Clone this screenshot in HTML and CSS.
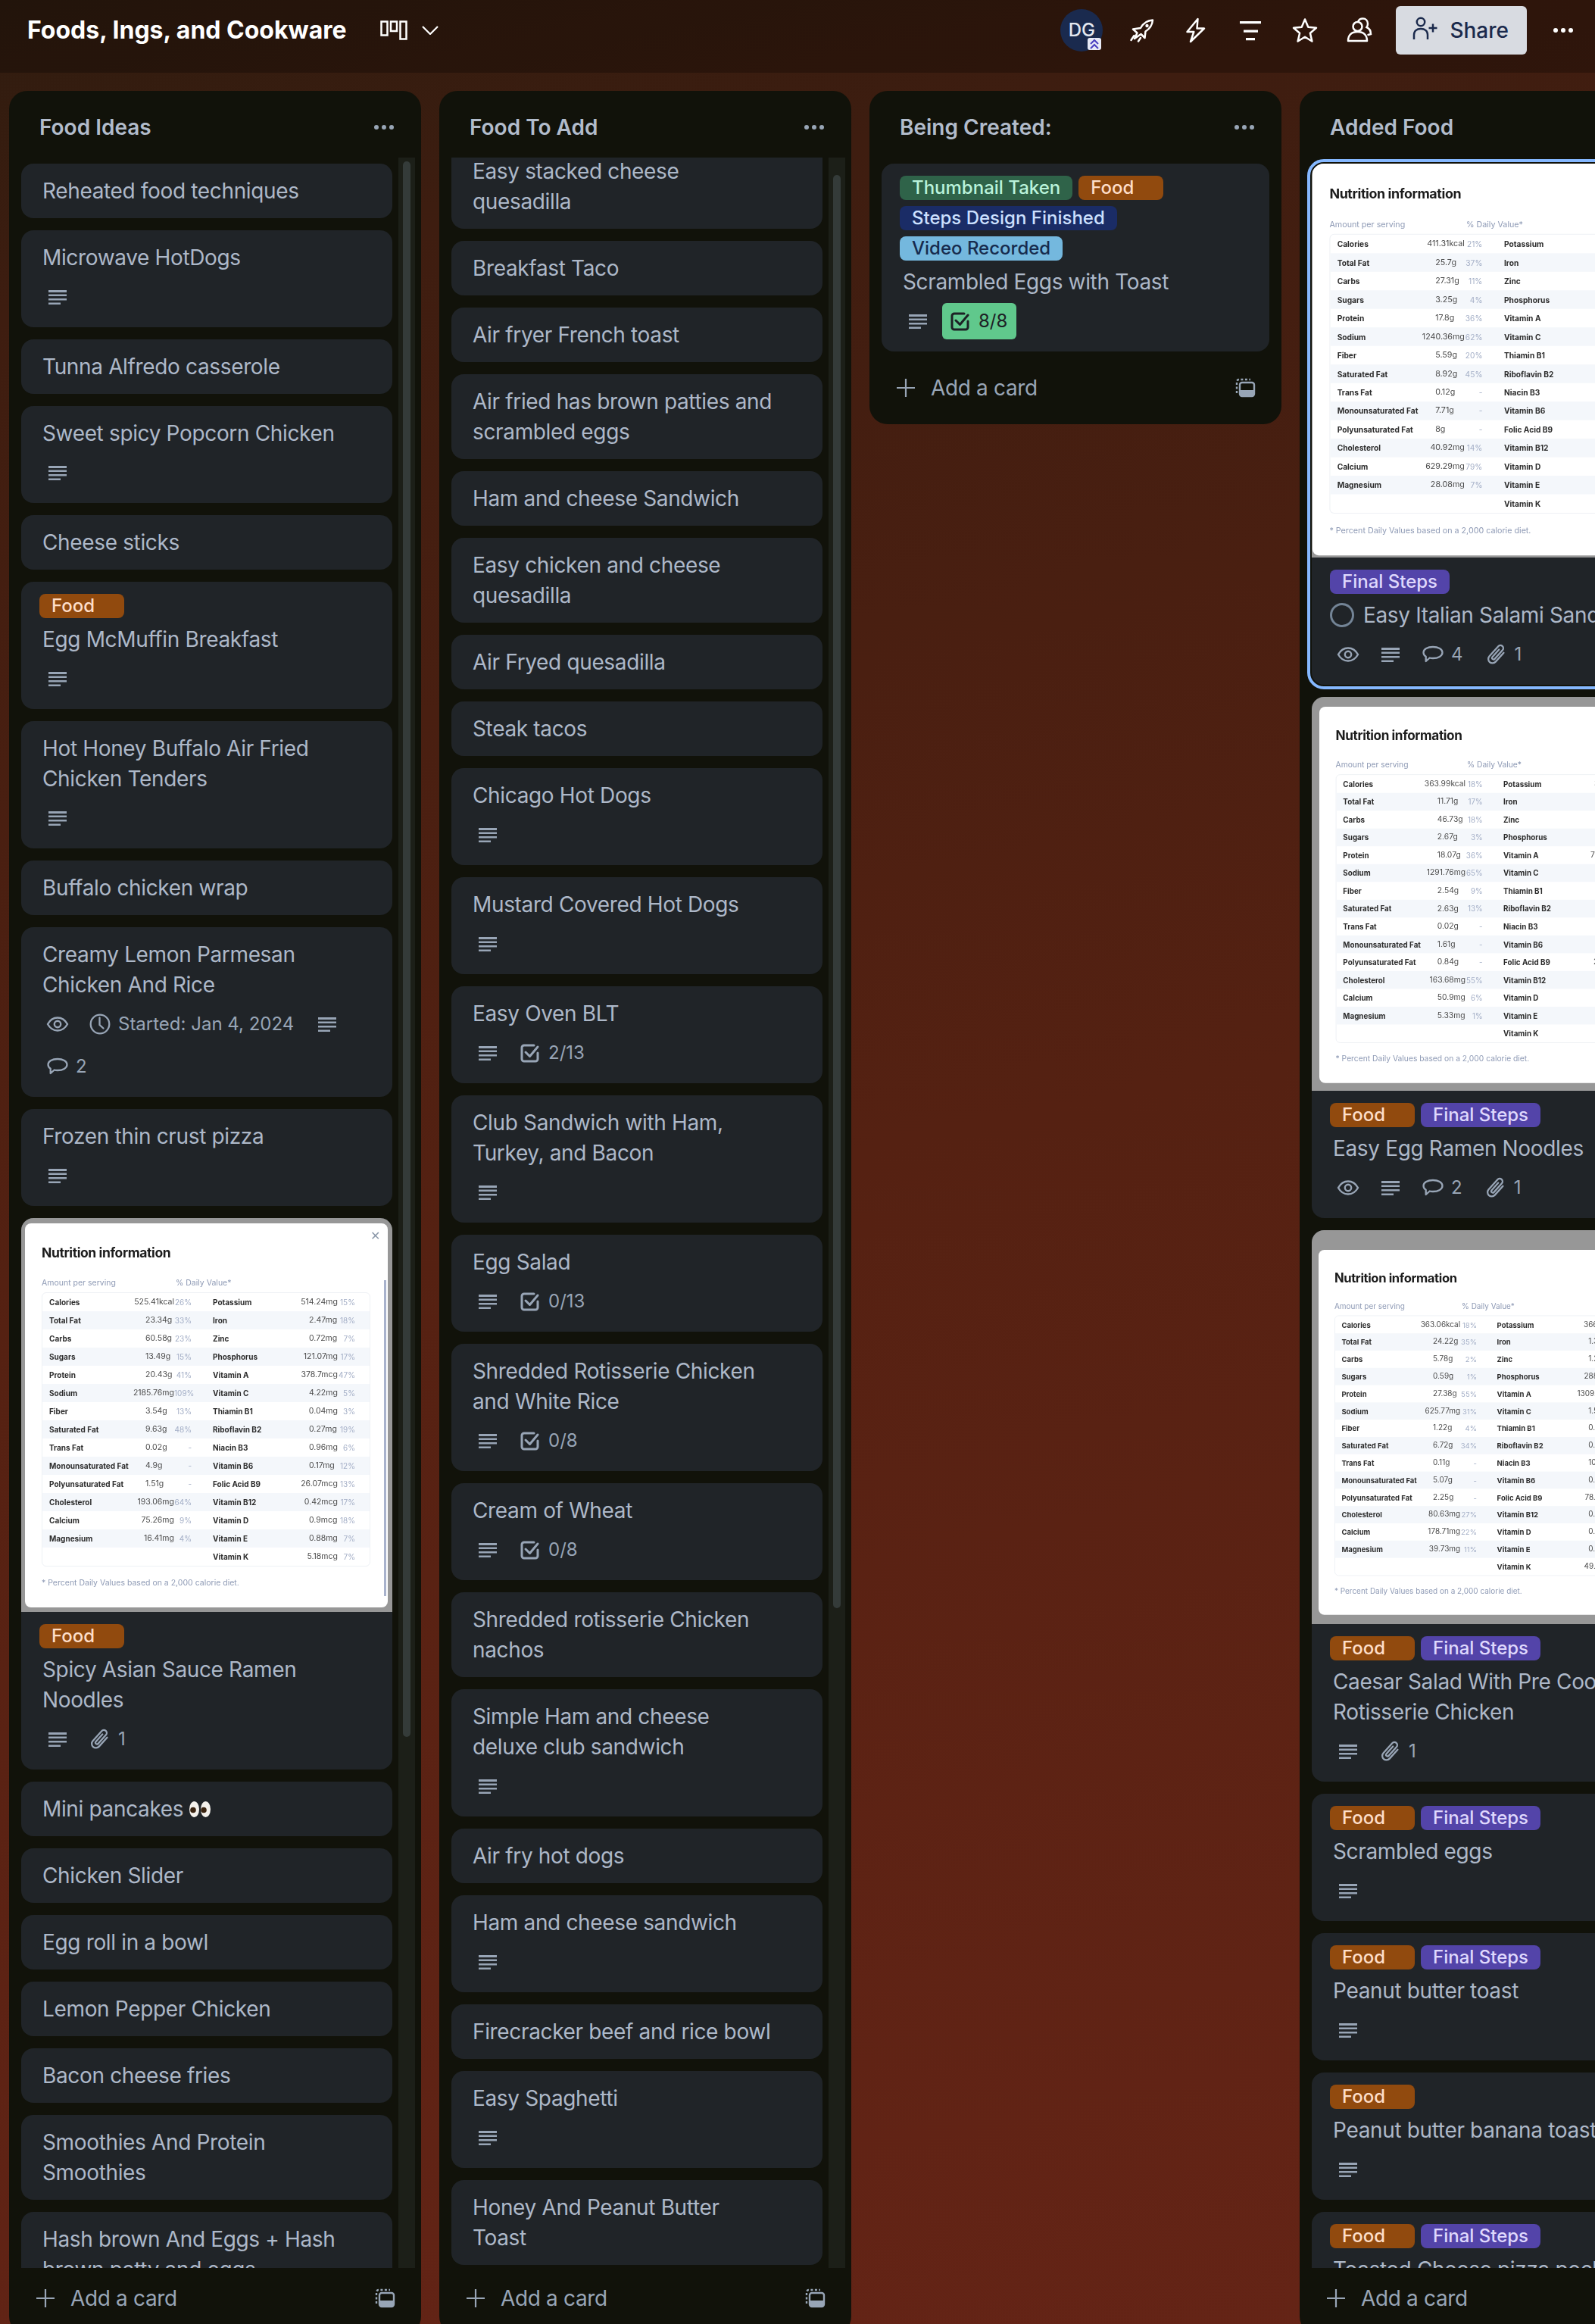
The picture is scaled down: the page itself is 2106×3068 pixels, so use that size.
FILE: index.html
```html
<!DOCTYPE html>
<html lang="en">
<head>
    <meta charset="UTF-8">
    <meta name="viewport" content="width=device-width, initial-scale=1.0">
    <title>Foods, Ings, and Cookware</title>
    <link rel="stylesheet" href="styles.css">
</head>
<body>
    <svg class="sprite" xmlns="http://www.w3.org/2000/svg">
        <symbol id="i-desc" viewBox="0 0 40 40"><path fill="currentColor" d="M8 11h24v3H8zM8 16.5h24v2.6H8zM8 22h24v2.6H8zM8 27.4h16v2.6H8z"/></symbol>
        <symbol id="i-eye" viewBox="0 0 40 40"><path fill="none" stroke="currentColor" stroke-width="2.4" d="M7 20c3-5.5 8-8.5 13-8.5s10 3 13 8.5c-3 5.5-8 8.5-13 8.5S10 25.5 7 20z"/><circle cx="20" cy="20" r="4.2" fill="none" stroke="currentColor" stroke-width="2.4"/></symbol>
        <symbol id="i-clock" viewBox="0 0 40 40"><circle cx="20" cy="20" r="12.3" fill="none" stroke="currentColor" stroke-width="2.3"/><path fill="none" stroke="currentColor" stroke-width="2.3" stroke-linecap="round" d="M19.5 11.5V21l5 4.5"/></symbol>
        <symbol id="i-comment" viewBox="0 0 40 40"><path fill="none" stroke="currentColor" stroke-width="2.3" stroke-linejoin="round" d="M7.5 17.5c0-4.5 5.5-7.5 12.5-7.5s12.5 3 12.5 7.5S27 25 20 25c-1.5 0-3-.1-4.3-.5l-5 4.5v-6.2C8.8 21.5 7.5 19.7 7.5 17.5z"/></symbol>
        <symbol id="i-clip" viewBox="0 0 40 40"><path fill="none" stroke="currentColor" stroke-width="2.3" stroke-linecap="round" transform="rotate(42 20 20)" d="M25.5 12v16a5.5 5.5 0 0 1-11 0V10.5a3.8 3.8 0 0 1 7.6 0V26a2 2 0 0 1-4 0V13"/></symbol>
        <symbol id="i-check" viewBox="0 0 40 40"><path fill="none" stroke="currentColor" stroke-width="3" stroke-linecap="round" stroke-linejoin="round" d="M30 20v8a3 3 0 0 1-3 3H12a3 3 0 0 1-3-3V13a3 3 0 0 1 3-3h13"/><path fill="none" stroke="currentColor" stroke-width="3" stroke-linecap="round" stroke-linejoin="round" d="M14 19l5.5 5.5L30 12"/></symbol>
        <symbol id="i-plus" viewBox="0 0 40 40"><path fill="none" stroke="currentColor" stroke-width="2.2" d="M20 8v24M8 20h24"/></symbol>
        <symbol id="i-template" viewBox="0 0 40 40"><path fill="none" stroke="currentColor" stroke-width="2.4" stroke-dasharray="3 2.5" d="M9 27V12a3 3 0 0 1 3-3h15"/><rect x="13" y="13" width="19" height="18" rx="3" fill="none" stroke="currentColor" stroke-width="2.4"/><path fill="currentColor" d="M13 23h19v5a3 3 0 0 1-3 3H16a3 3 0 0 1-3-3z"/></symbol>
        <symbol id="i-dots" viewBox="0 0 40 40"><circle cx="10" cy="20" r="3" fill="currentColor"/><circle cx="20" cy="20" r="3" fill="currentColor"/><circle cx="30" cy="20" r="3" fill="currentColor"/></symbol>
        <symbol id="i-rocket" viewBox="0 0 40 40"><path fill="none" stroke="currentColor" stroke-width="2.5" stroke-linejoin="round" d="M35 6.5c-6.5.5-12.5 4-16 10.5L9 18.5l5.5 5L11 31l8.5-6 5 5 1-8.5C31 18 34.5 13 35 6.5z"/><circle cx="27.5" cy="14" r="2.2" fill="currentColor"/><path fill="none" stroke="currentColor" stroke-width="2.5" stroke-linecap="round" d="M6.5 33l4-6M16 34.5l3-4.5"/></symbol>
        <symbol id="i-bolt" viewBox="0 0 40 40"><path fill="none" stroke="currentColor" stroke-width="2.5" stroke-linejoin="round" d="M22.5 5L8.5 22h8.8L13 35 31 17.5h-9.5z"/></symbol>
        <symbol id="i-filter" viewBox="0 0 40 40"><path fill="currentColor" d="M6 8h28v3.2H6zM11 19.5h19v3.2H11zM14 30h12v3.2H14z"/></symbol>
        <symbol id="i-star" viewBox="0 0 40 40"><path fill="none" stroke="currentColor" stroke-width="2.5" stroke-linejoin="round" d="M20 5.5l4.3 10.3 10.7.9-8.1 7 2.5 10.8L20 28.7l-9.4 5.8 2.5-10.8-8.1-7 10.7-.9z"/></symbol>
        <symbol id="i-people" viewBox="0 0 40 40"><circle cx="17.5" cy="15" r="6" fill="none" stroke="currentColor" stroke-width="2.5"/><path fill="none" stroke="currentColor" stroke-width="2.5" stroke-linejoin="round" d="M5 34c0-8 5-12 12.5-12S30 26 30 34z"/><path fill="none" stroke="currentColor" stroke-width="2.5" stroke-linecap="round" d="M18.5 8c1-2.5 3.5-3.5 6-3.5 4 0 6.5 3 6.5 7 0 1.500-.5 3-1.500 4.500 3.500 1.500 5.500 4.500 5.500 9l-3.500 1"/></symbol>
        <symbol id="i-share" viewBox="0 0 40 40"><circle cx="14" cy="9" r="5.2" fill="none" stroke="currentColor" stroke-width="2.5"/><path fill="none" stroke="currentColor" stroke-width="2.5" d="M5 32v-6c0-5 3.5-8 9-8s9 3 9 8v6M30 11.5v11M24.5 17h11"/></symbol>
    </svg>

    <header class="topbar">
        <h1 class="board-name">Foods, Ings, and Cookware</h1>
        <svg class="board-view" viewBox="0 0 36 26"><path fill="none" stroke="currentColor" stroke-width="2.5" d="M1.5 1.5h8v18h-8zM14 1.5h8V14h-8zM26.5 1.5h8v23h-8z"/></svg>
        <svg class="chevron" viewBox="0 0 24 12"><path fill="none" stroke="currentColor" stroke-width="2.2" d="M2 1l10 10L22 1"/></svg>
        <div class="topbar-right">
            <div class="avatar">DG
                <svg class="avatar-badge" viewBox="0 0 18 16"><rect width="18" height="16" rx="3" fill="#e8eaf6"/><path fill="none" stroke="#4a3fc0" stroke-width="2" d="M4 8l5-5 5 5M4 14l5-5 5 5"/></svg>
            </div>
            <svg class="top-icon first"><use href="#i-rocket"/></svg>
            <svg class="top-icon"><use href="#i-bolt"/></svg>
            <svg class="top-icon"><use href="#i-filter"/></svg>
            <svg class="top-icon"><use href="#i-star"/></svg>
            <svg class="top-icon"><use href="#i-people"/></svg>
            <button class="share"><svg class="i"><use href="#i-share"/></svg>Share</button>
            <svg class="top-icon more"><use href="#i-dots"/></svg>
        </div>
    </header>

    <main class="board">
        <section class="col col-long">
            <div class="col-head"><h2>Food Ideas</h2><svg class="i"><use href="#i-dots"/></svg></div>
            <div class="col-body">
                <div class="cards">
                    <article class="card"><p class="title">Reheated food techniques</p></article>
                    <article class="card"><p class="title">Microwave HotDogs</p><div class="badges"><svg class="i"><use href="#i-desc"/></svg></div></article>
                    <article class="card"><p class="title">Tunna Alfredo casserole</p></article>
                    <article class="card"><p class="title">Sweet spicy Popcorn Chicken</p><div class="badges"><svg class="i"><use href="#i-desc"/></svg></div></article>
                    <article class="card"><p class="title">Cheese sticks</p></article>
                    <article class="card">
                        <div class="labels"><span class="label food">Food</span></div>
                        <p class="title">Egg McMuffin Breakfast</p>
                        <div class="badges"><svg class="i"><use href="#i-desc"/></svg></div>
                    </article>
                    <article class="card"><p class="title">Hot Honey Buffalo Air Fried Chicken Tenders</p><div class="badges"><svg class="i"><use href="#i-desc"/></svg></div></article>
                    <article class="card"><p class="title">Buffalo chicken wrap</p></article>
                    <article class="card">
                        <p class="title">Creamy Lemon Parmesan Chicken And Rice</p>
                        <div class="badges">
                            <svg class="i"><use href="#i-eye"/></svg>
                            <span class="badge"><svg class="i"><use href="#i-clock"/></svg>Started: Jan 4, 2024</span>
                            <svg class="i"><use href="#i-desc"/></svg>
                            <span class="badge"><svg class="i"><use href="#i-comment"/></svg>2</span>
                        </div>
                    </article>
                    <article class="card"><p class="title">Frozen thin crust pizza</p><div class="badges"><svg class="i"><use href="#i-desc"/></svg></div></article>
                    <article class="card">
                        <div class="shot shot-a"><div class="modal" data-panel="spicy"></div></div>
                        <div class="labels"><span class="label food">Food</span></div>
                        <p class="title">Spicy Asian Sauce Ramen Noodles</p>
                        <div class="badges">
                            <svg class="i"><use href="#i-desc"/></svg>
                            <span class="badge"><svg class="i"><use href="#i-clip"/></svg>1</span>
                        </div>
                    </article>
                    <article class="card">
                        <p class="title">Mini pancakes <svg class="eyes" viewBox="0 0 28 21"><ellipse cx="6.5" cy="10.5" rx="6.5" ry="10.5" fill="#f4f1ec"/><ellipse cx="21.5" cy="10.5" rx="6.5" ry="10.5" fill="#f4f1ec"/><circle cx="5" cy="11.5" r="3.8" fill="#3a2410"/><circle cx="19" cy="11.5" r="3.8" fill="#3a2410"/></svg></p>
                    </article>
                    <article class="card"><p class="title">Chicken Slider</p></article>
                    <article class="card"><p class="title">Egg roll in a bowl</p></article>
                    <article class="card"><p class="title">Lemon Pepper Chicken</p></article>
                    <article class="card"><p class="title">Bacon cheese fries</p></article>
                    <article class="card"><p class="title">Smoothies And Protein Smoothies</p></article>
                    <article class="card"><p class="title">Hash brown And Eggs + Hash brown patty and eggs</p></article>
                </div>
                <div class="track"><div class="thumb thumb-ideas"></div></div>
            </div>
            <div class="col-foot"><svg class="i"><use href="#i-plus"/></svg><span>Add a card</span><svg class="i template"><use href="#i-template"/></svg></div>
        </section>

        <section class="col col-long">
            <div class="col-head"><h2>Food To Add</h2><svg class="i"><use href="#i-dots"/></svg></div>
            <div class="col-body">
                <div class="cards scrolled">
                    <article class="card"><p class="title">Easy stacked cheese quesadilla</p></article>
                    <article class="card"><p class="title">Breakfast Taco</p></article>
                    <article class="card"><p class="title">Air fryer French toast</p></article>
                    <article class="card"><p class="title">Air fried has brown patties and scrambled eggs</p></article>
                    <article class="card"><p class="title">Ham and cheese Sandwich</p></article>
                    <article class="card"><p class="title">Easy chicken and cheese quesadilla</p></article>
                    <article class="card"><p class="title">Air Fryed quesadilla</p></article>
                    <article class="card"><p class="title">Steak tacos</p></article>
                    <article class="card"><p class="title">Chicago Hot Dogs</p><div class="badges"><svg class="i"><use href="#i-desc"/></svg></div></article>
                    <article class="card"><p class="title">Mustard Covered Hot Dogs</p><div class="badges"><svg class="i"><use href="#i-desc"/></svg></div></article>
                    <article class="card">
                        <p class="title">Easy Oven BLT</p>
                        <div class="badges"><svg class="i"><use href="#i-desc"/></svg><span class="badge"><svg class="i"><use href="#i-check"/></svg>2/13</span></div>
                    </article>
                    <article class="card"><p class="title">Club Sandwich with Ham, Turkey, and Bacon</p><div class="badges"><svg class="i"><use href="#i-desc"/></svg></div></article>
                    <article class="card">
                        <p class="title">Egg Salad</p>
                        <div class="badges"><svg class="i"><use href="#i-desc"/></svg><span class="badge"><svg class="i"><use href="#i-check"/></svg>0/13</span></div>
                    </article>
                    <article class="card">
                        <p class="title">Shredded Rotisserie Chicken and White Rice</p>
                        <div class="badges"><svg class="i"><use href="#i-desc"/></svg><span class="badge"><svg class="i"><use href="#i-check"/></svg>0/8</span></div>
                    </article>
                    <article class="card">
                        <p class="title">Cream of Wheat</p>
                        <div class="badges"><svg class="i"><use href="#i-desc"/></svg><span class="badge"><svg class="i"><use href="#i-check"/></svg>0/8</span></div>
                    </article>
                    <article class="card"><p class="title">Shredded rotisserie Chicken nachos</p></article>
                    <article class="card"><p class="title">Simple Ham and cheese deluxe club sandwich</p><div class="badges"><svg class="i"><use href="#i-desc"/></svg></div></article>
                    <article class="card"><p class="title">Air fry hot dogs</p></article>
                    <article class="card"><p class="title">Ham and cheese sandwich</p><div class="badges"><svg class="i"><use href="#i-desc"/></svg></div></article>
                    <article class="card"><p class="title">Firecracker beef and rice bowl</p></article>
                    <article class="card"><p class="title">Easy Spaghetti</p><div class="badges"><svg class="i"><use href="#i-desc"/></svg></div></article>
                    <article class="card"><p class="title">Honey And Peanut Butter Toast</p></article>
                </div>
                <div class="track"><div class="thumb thumb-add"></div></div>
            </div>
            <div class="col-foot"><svg class="i"><use href="#i-plus"/></svg><span>Add a card</span><svg class="i template"><use href="#i-template"/></svg></div>
        </section>

        <section class="col">
            <div class="col-head"><h2>Being Created:</h2><svg class="i"><use href="#i-dots"/></svg></div>
            <div class="col-body">
                <div class="cards cards-wide">
                    <article class="card">
                        <div class="labels">
                            <span class="label thumbnail">Thumbnail Taken</span>
                            <span class="label food">Food</span>
                            <span class="label design">Steps Design Finished</span>
                            <span class="label video">Video Recorded</span>
                        </div>
                        <p class="title">Scrambled Eggs with Toast</p>
                        <div class="badges">
                            <svg class="i"><use href="#i-desc"/></svg>
                            <span class="badge done"><svg class="i"><use href="#i-check"/></svg>8/8</span>
                        </div>
                    </article>
                </div>
            </div>
            <div class="col-foot"><svg class="i"><use href="#i-plus"/></svg><span>Add a card</span><svg class="i template"><use href="#i-template"/></svg></div>
        </section>

        <section class="col col-long">
            <div class="col-head"><h2>Added Food</h2><svg class="i"><use href="#i-dots"/></svg></div>
            <div class="col-body">
                <div class="cards">
                    <article class="card selected">
                        <div class="shot shot-b"><div class="modal" data-panel="salami"></div></div>
                        <div class="labels"><span class="label final">Final Steps</span></div>
                        <p class="title nowrap"><span class="circle"></span>Easy Italian Salami Sandwich</p>
                        <div class="badges">
                            <svg class="i"><use href="#i-eye"/></svg>
                            <svg class="i"><use href="#i-desc"/></svg>
                            <span class="badge"><svg class="i"><use href="#i-comment"/></svg>4</span>
                            <span class="badge"><svg class="i"><use href="#i-clip"/></svg>1</span>
                        </div>
                    </article>
                    <article class="card">
                        <div class="shot shot-c"><div class="modal" data-panel="ramen"></div></div>
                        <div class="labels"><span class="label food">Food</span><span class="label final">Final Steps</span></div>
                        <p class="title">Easy Egg Ramen Noodles</p>
                        <div class="badges">
                            <svg class="i"><use href="#i-eye"/></svg>
                            <svg class="i"><use href="#i-desc"/></svg>
                            <span class="badge"><svg class="i"><use href="#i-comment"/></svg>2</span>
                            <span class="badge"><svg class="i"><use href="#i-clip"/></svg>1</span>
                        </div>
                    </article>
                    <article class="card">
                        <div class="shot shot-d"><div class="modal" data-panel="caesar"></div></div>
                        <div class="labels"><span class="label food">Food</span><span class="label final">Final Steps</span></div>
                        <p class="title wide">Caesar Salad With Pre Cooked Rotisserie Chicken</p>
                        <div class="badges">
                            <svg class="i"><use href="#i-desc"/></svg>
                            <span class="badge"><svg class="i"><use href="#i-clip"/></svg>1</span>
                        </div>
                    </article>
                    <article class="card">
                        <div class="labels"><span class="label food">Food</span><span class="label final">Final Steps</span></div>
                        <p class="title">Scrambled eggs</p>
                        <div class="badges"><svg class="i"><use href="#i-desc"/></svg></div>
                    </article>
                    <article class="card">
                        <div class="labels"><span class="label food">Food</span><span class="label final">Final Steps</span></div>
                        <p class="title">Peanut butter toast</p>
                        <div class="badges"><svg class="i"><use href="#i-desc"/></svg></div>
                    </article>
                    <article class="card">
                        <div class="labels"><span class="label food">Food</span></div>
                        <p class="title wide">Peanut butter banana toast</p>
                        <div class="badges"><svg class="i"><use href="#i-desc"/></svg></div>
                    </article>
                    <article class="card">
                        <div class="labels"><span class="label food">Food</span><span class="label final">Final Steps</span></div>
                        <p class="title wide">Toasted Cheese pizza pockets</p>
                    </article>
                </div>
            </div>
            <div class="col-foot"><svg class="i"><use href="#i-plus"/></svg><span>Add a card</span><svg class="i template"><use href="#i-template"/></svg></div>
        </section>
    </main>

    <script src="panels.js"></script>
</body>
</html>
```

FILE: styles.css
```css
* {
    box-sizing: border-box;
}
html, body {
    margin: 0;
    height: 3068px;
    overflow: hidden;
}
body {
    font-family: Inter, "Liberation Sans", sans-serif;
    font-size: 28px;
    line-height: 40px;
    color: #adb8c8;
    background: linear-gradient(168deg, #2f1c0f 0%, #3e1d10 12%, #552112 50%, #652416 100%);
}
.sprite {
    display: none;
}
.i {
    width: 40px;
    height: 40px;
    flex: none;
    color: #98a5b6;
}

/* top bar */
.topbar {
    display: flex;
    align-items: center;
    height: 96px;
    padding: 8px 22px 24px 36px;
    background: rgba(0, 0, 0, 0.26);
    color: #fff;
}
.board-name {
    margin: 0;
    font-size: 32px;
    font-weight: 700;
    line-height: 48px;
    white-space: nowrap;
}
.board-view {
    width: 36px;
    height: 26px;
    margin-left: 44px;
}
.chevron {
    width: 24px;
    height: 12px;
    margin-left: 18px;
}
.topbar-right {
    display: flex;
    align-items: center;
    margin-left: auto;
}
.avatar {
    position: relative;
    display: flex;
    align-items: center;
    justify-content: center;
    width: 56px;
    height: 56px;
    border-radius: 50%;
    background: #1a2a4e;
    font-size: 24px;
    font-weight: 500;
    color: #e4e8f0;
}
.avatar-badge {
    position: absolute;
    right: 2px;
    bottom: 2px;
    width: 18px;
    height: 16px;
}
.top-icon {
    width: 40px;
    height: 40px;
    margin-left: 32px;
    color: #fff;
}
.top-icon.first {
    margin-left: 31px;
}
.share {
    display: flex;
    align-items: center;
    gap: 12px;
    height: 64px;
    margin-left: 28px;
    padding: 0 24px 0 19px;
    border: 0;
    border-radius: 6px;
    background: #d8dbe1;
    font: 500 28px Inter, sans-serif;
    color: #1b2a4c;
}
.share .i {
    color: #1b2a4c;
}
.top-icon.more {
    margin-left: 28px;
}

/* board and lists */
.board {
    display: flex;
    align-items: flex-start;
    gap: 24px;
    height: 2972px;
    padding: 24px 12px 0;
    overflow: hidden;
}
.col {
    display: flex;
    flex-direction: column;
    flex: none;
    width: 544px;
    border-radius: 24px;
    background: #11120a;
}
.col-long {
    height: 2962px;
}
.col-head {
    display: flex;
    align-items: center;
    justify-content: space-between;
    flex: none;
    height: 88px;
    padding: 8px 29px 0 40px;
}
.col-head h2 {
    margin: 0;
    font-size: 28px;
    font-weight: 600;
    color: #b2bccb;
}
.col-body {
    display: flex;
    flex: 1;
    gap: 8px;
    min-height: 0;
}
.cards {
    display: flex;
    flex-direction: column;
    gap: 16px;
    flex: none;
    width: 506px;
    padding: 8px 0 8px 16px;
    overflow: hidden;
}
.cards-wide {
    width: 528px;
}
.cards.scrolled .card:first-child {
    margin-top: -26px;
}
.track {
    flex: none;
    width: 22px;
    padding: 5px 6px 0;
    background: #1c1f18;
}
.thumb {
    border-radius: 6px;
    background: #343b39;
}
.thumb-ideas {
    height: 2080px;
}
.thumb-add {
    height: 1892px;
    margin-top: 18px;
}
.col-foot {
    display: flex;
    align-items: center;
    flex: none;
    height: 80px;
    margin-top: 8px;
    padding: 0 28px 16px;
    gap: 13px;
    color: #98a5b6;
    letter-spacing: -0.35px;
}
.col-foot .template {
    margin-left: auto;
}

/* cards */
.card {
    flex: none;
    padding-bottom: 16px;
    border-radius: 16px;
    background: #202428;
}
.card.selected {
    outline: 4px solid #85b8ff;
    outline-offset: 2px;
}
.title {
    margin: 0;
    padding: 16px 65px 0 28px;
    letter-spacing: -0.35px;
}
.title.wide {
    padding-right: 28px;
}
.nowrap {
    display: flex;
    align-items: center;
    gap: 12px;
    padding-left: 24px;
    white-space: nowrap;
}
.labels + .title {
    padding-top: 8px;
}
.circle {
    flex: none;
    width: 32px;
    height: 32px;
    border: 3px solid #738496;
    border-radius: 50%;
}
.labels {
    display: flex;
    flex-wrap: wrap;
    gap: 8px;
    padding: 16px 24px 0;
}
.label {
    height: 32px;
    min-width: 112px;
    padding: 0 16px;
    border-radius: 8px;
    font-size: 24px;
    font-weight: 500;
    line-height: 32px;
}
.food {
    background: #914a0e;
    color: #fedec8;
}
.final {
    background: #5344a9;
    color: #dfd8fd;
}
.thumbnail {
    background: #2f6349;
    color: #baf3db;
}
.design {
    background: #1a2c66;
    color: #cce0ff;
}
.video {
    background: #74b8de;
    color: #172b4d;
}
.badges {
    display: flex;
    flex-wrap: wrap;
    align-items: center;
    gap: 8px 16px;
    padding: 8px 28px 0;
    font-size: 24px;
    color: #98a5b6;
}
.badges > .i {
    margin: 4px 0;
}
.badge {
    display: flex;
    align-items: center;
    gap: 4px;
    height: 48px;
    padding-right: 8px;
}
.badge.done {
    margin-left: -4px;
    padding: 0 12px 0 4px;
    border-radius: 6px;
    background: #60c88c;
    color: #1d2125;
}
.badge.done .i {
    color: #1d2125;
}
.eyes {
    width: 28px;
    height: 21px;
    vertical-align: -1px;
}

/* nutrition screenshots on the card covers */
.shot {
    height: 520px;
    overflow: hidden;
    border-radius: 16px 16px 0 0;
    background: #979797;
}
.modal {
    position: relative;
    width: 479px;
    height: 507px;
    padding: 27px 0 0 22px;
    border-radius: 8px;
    background: #fff;
    transform-origin: 0 0;
    filter: blur(0.4px);
    font-size: 10.5px;
    line-height: 16px;
    color: #8e9ab5;
}
.shot-a .modal {
    margin: 7px 0 0 5px;
}
.shot-b .modal {
    margin: 0 0 0 1px;
    transform: scale(1.02);
}
.shot-c .modal {
    margin: 13px 0 0 10px;
    transform: scale(0.98);
}
.shot-d .modal {
    margin: 26px 0 0 9px;
    transform: scale(0.95);
}
.modal-close {
    position: absolute;
    top: 8px;
    right: 10px;
    font-size: 16px;
    color: #8a97a8;
}
.modal-bar {
    position: absolute;
    top: 75px;
    right: 2px;
    width: 3px;
    height: 417px;
    background: #a8b2cc;
}
.modal h3 {
    margin: 0;
    font-size: 17.5px;
    font-weight: 700;
    line-height: 24px;
    letter-spacing: -0.4px;
    color: #1c1c1c;
}
.modal-head {
    display: grid;
    grid-template-columns: 177px auto;
    margin-top: 20px;
}
.nutri {
    width: 434px;
    margin-top: 4px;
    border: 1px solid #eef1f5;
    border-radius: 6px;
}
.nutri-row {
    display: grid;
    grid-template-columns: 188px 188px;
    column-gap: 28px;
    height: 24px;
    padding-left: 9px;
    line-height: 24px;
}
.nutri-row:nth-child(even) {
    background: #f4f7fb;
}
.half {
    display: flex;
    white-space: nowrap;
}
.half b {
    flex: 1;
    font-weight: 700;
    font-size: 10px;
    color: #2c2c2c;
}
.half .val {
    min-width: 38px;
    color: #4a4a4a;
}
.half .pct {
    flex: none;
    width: 23px;
    font-size: 10px;
    text-align: right;
    color: #a3aec6;
}
.modal-note {
    margin: 14px 0 0;
}
```

FILE: panels.js
```js
// rows: name, value, percent. right hand column first row is Potassium
const leftNames = ['Calories', 'Total Fat', 'Carbs', 'Sugars', 'Protein', 'Sodium', 'Fiber', 'Saturated Fat',
    'Trans Fat', 'Monounsaturated Fat', 'Polyunsaturated Fat', 'Cholesterol', 'Calcium', 'Magnesium', ''];
const rightNames = ['Potassium', 'Iron', 'Zinc', 'Phosphorus', 'Vitamin A', 'Vitamin C', 'Thiamin B1', 'Riboflavin B2',
    'Niacin B3', 'Vitamin B6', 'Folic Acid B9', 'Vitamin B12', 'Vitamin D', 'Vitamin E', 'Vitamin K'];

const panels = {
    spicy: {
        left: '525.41kcal 26%,23.34g 33%,60.58g 23%,13.49g 15%,20.43g 41%,2185.76mg 109%,3.54g 13%,9.63g 48%,0.02g -,4.9g -,1.51g -,193.06mg 64%,75.26mg 9%,16.41mg 4%',
        right: '514.24mg 15%,2.47mg 18%,0.72mg 7%,121.07mg 17%,378.7mcg 47%,4.22mg 5%,0.04mg 3%,0.27mg 19%,0.96mg 6%,0.17mg 12%,26.07mcg 13%,0.42mcg 17%,0.9mcg 18%,0.88mg 7%,5.18mcg 7%'
    },
    salami: {
        left: '411.31kcal 21%,25.7g 37%,27.31g 11%,3.25g 4%,17.8g 36%,1240.36mg 62%,5.59g 20%,8.92g 45%,0.12g -,7.71g -,8g -,40.92mg 14%,629.29mg 79%,28.08mg 7%',
        right: '0.5mg 2%,0.5mg 2%,0.5mg 2%,0.5mg 2%,0.5mg 2%,0.5mg 2%,0.5mg 2%,0.5mg 2%,0.5mg 2%,0.5mg 2%,118.4mcg 30%,0.5mg 2%,0.5mg 2%,0.5mg 2%,0.5mg 2%'
    },
    ramen: {
        left: '363.99kcal 18%,11.71g 17%,46.73g 18%,2.67g 3%,18.07g 36%,1291.76mg 65%,2.54g 9%,2.63g 13%,0.02g -,1.61g -,0.84g -,163.68mg 55%,50.9mg 6%,5.33mg 1%',
        right: '312.4mg 9%,1.1mg 6%,1.1mg 10%,1.1mg 10%,714.2mcg 79%,1.1mg 1%,0.1mg 8%,0.1mg 8%,1.1mg 7%,0.1mg 6%,24.6mcg 6%,0.1mcg 4%,0.1mcg 1%,0.1mg 1%,0.1mcg 1%'
    },
    caesar: {
        left: '363.06kcal 18%,24.22g 35%,5.78g 2%,0.59g 1%,27.38g 55%,625.77mg 31%,1.22g 4%,6.72g 34%,0.11g -,5.07g -,2.25g -,80.63mg 27%,178.71mg 22%,39.73mg 11%',
        right: '366.4mg 10%,1.3mg 7%,1.2mg 11%,288.5mg 41%,1309.7mcg 99%,1.5mg 2%,0.2mg 17%,0.4mg 31%,10.1mg 63%,0.4mg 31%,78.2mcg 20%,0.5mcg 21%,0.4mcg 2%,0.8mg 5%,49.5mcg 41%'
    }
};

function half(name, entry) {
    if (!name) return '<div class="half"></div>';
    let [val, pct] = entry.split(' ');
    return `<div class="half"><b>${name}</b><span class="val">${val}</span><span class="pct">${pct}</span></div>`;
}

document.querySelectorAll('.modal').forEach(function (modal) {
    let data = panels[modal.dataset.panel];
    let left = data.left.split(',');
    let right = data.right.split(',');
    let rows = '';
    for (let i = 0; i < 15; i++) {
        rows += `<div class="nutri-row">${half(leftNames[i], left[i] || '')}${half(rightNames[i], right[i])}</div>`;
    }
    modal.innerHTML = `<span class="modal-close">✕</span><span class="modal-bar"></span>
        <h3>Nutrition information</h3>
        <div class="modal-head"><span>Amount per serving</span><span>% Daily Value*</span></div>
        <div class="nutri">${rows}</div>
        <p class="modal-note">* Percent Daily Values based on a 2,000 calorie diet.</p>`;
});
```
